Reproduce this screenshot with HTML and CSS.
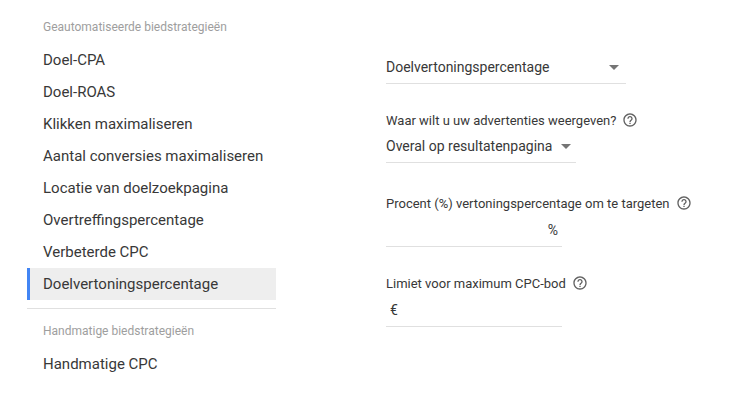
FILE: index.html
```html
<!DOCTYPE html>
<html>
<head>
    <meta charset="UTF-8">
    <title>Biedstrategie</title>
    <link rel="stylesheet" href="styles.css">
</head>
<body>
    <div class="page">
        <div class="strategies">
            <div class="group-title">Geautomatiseerde biedstrategieën</div>
            <div class="item">Doel-CPA</div>
            <div class="item">Doel-ROAS</div>
            <div class="item">Klikken maximaliseren</div>
            <div class="item">Aantal conversies maximaliseren</div>
            <div class="item">Locatie van doelzoekpagina</div>
            <div class="item">Overtreffingspercentage</div>
            <div class="item">Verbeterde CPC</div>
            <div class="item selected">Doelvertoningspercentage</div>
            <div class="divider"></div>
            <div class="group-title second">Handmatige biedstrategieën</div>
            <div class="item">Handmatige CPC</div>
        </div>

        <div class="settings">
            <div class="select wide">
                <span>Doelvertoningspercentage</span>
                <span class="arrow"></span>
            </div>

            <div class="field where">
                <div class="label">Waar wilt u uw advertenties weergeven?
                    <svg class="help" viewBox="0 0 24 24"><path d="M11 18h2v-2h-2v2zm1-16C6.48 2 2 6.48 2 12s4.48 10 10 10 10-4.48 10-10S17.52 2 12 2zm0 18c-4.41 0-8-3.59-8-8s3.59-8 8-8 8 3.59 8 8-3.59 8-8 8zm0-14c-2.21 0-4 1.79-4 4h2c0-1.1.9-2 2-2s2 .9 2 2c0 2-3 1.75-3 5h2c0-2.25 3-2.5 3-5 0-2.21-1.79-4-4-4z"/></svg>
                </div>
                <div class="select medium">
                    <span>Overal op resultatenpagina</span>
                    <span class="arrow"></span>
                </div>
            </div>

            <div class="field percent">
                <div class="label">Procent (%) vertoningspercentage om te targeten
                    <svg class="help" viewBox="0 0 24 24"><path d="M11 18h2v-2h-2v2zm1-16C6.48 2 2 6.48 2 12s4.48 10 10 10 10-4.48 10-10S17.52 2 12 2zm0 18c-4.41 0-8-3.59-8-8s3.59-8 8-8 8 3.59 8 8-3.59 8-8 8zm0-14c-2.21 0-4 1.79-4 4h2c0-1.1.9-2 2-2s2 .9 2 2c0 2-3 1.75-3 5h2c0-2.25 3-2.5 3-5 0-2.21-1.79-4-4-4z"/></svg>
                </div>
                <div class="input suffix"><span>%</span></div>
            </div>

            <div class="field bid">
                <div class="label">Limiet voor maximum CPC-bod
                    <svg class="help" viewBox="0 0 24 24"><path d="M11 18h2v-2h-2v2zm1-16C6.48 2 2 6.48 2 12s4.48 10 10 10 10-4.48 10-10S17.52 2 12 2zm0 18c-4.41 0-8-3.59-8-8s3.59-8 8-8 8 3.59 8 8-3.59 8-8 8zm0-14c-2.21 0-4 1.79-4 4h2c0-1.1.9-2 2-2s2 .9 2 2c0 2-3 1.75-3 5h2c0-2.25 3-2.5 3-5 0-2.21-1.79-4-4-4z"/></svg>
                </div>
                <div class="input prefix"><span>€</span></div>
            </div>
        </div>
    </div>
</body>
</html>
```

FILE: styles.css
```css
body {
    font-family: Roboto, Arial, sans-serif;
    margin: 0;
    background-color: white;
    color: #383838;
}

.page {
    display: flex;
}

.strategies {
    width: 249px;
    margin-left: 27px;
    padding-top: 16px;
}

.group-title {
    height: 22px;
    line-height: 22px;
    padding-left: 16px;
    font-size: 12px;
    color: #9e9e9e;
    margin-bottom: 6px;
}

.group-title.second {
    margin-top: 11px;
}

.item {
    height: 32px;
    line-height: 33px;
    padding-left: 16px;
    font-size: 15px;
}

.item.selected {
    background-color: #eeeeee;
    border-left: 3px solid #4285f4;
    padding-left: 13px;
}

.divider {
    margin-top: 8px;
    height: 1px;
    background-color: #e0e0e0;
}

.settings {
    margin-left: 110px;
    padding-top: 51px;
}

.select {
    display: flex;
    justify-content: space-between;
    align-items: center;
    height: 32px;
    font-size: 14px;
    white-space: nowrap;
    border-bottom: 1px solid #e0e0e0;
}

.select.wide {
    width: 240px;
}

.select.medium {
    width: 190px;
}

.arrow {
    width: 0;
    height: 0;
    border-left: 5px solid transparent;
    border-right: 5px solid transparent;
    border-top: 5px solid #757575;
    margin-right: 7px;
}

.select.medium .arrow {
    margin-right: 5px;
}

.field.where {
    margin-top: 26px;
}

.field.percent {
    margin-top: 30px;
}

.field.bid {
    margin-top: 26px;
}

.label {
    display: flex;
    align-items: center;
    height: 20px;
    font-size: 13px;
    white-space: nowrap;
}

.help {
    width: 16px;
    height: 16px;
    margin-left: 6px;
    fill: #616161;
}

.input {
    width: 176px;
    height: 33px;
    display: flex;
    align-items: center;
    font-size: 14px;
    border-bottom: 1px solid #e0e0e0;
}

.input.suffix {
    justify-content: flex-end;
}

.input.suffix span {
    margin-right: 4px;
}

.input.prefix span {
    margin-left: 4px;
}
```
